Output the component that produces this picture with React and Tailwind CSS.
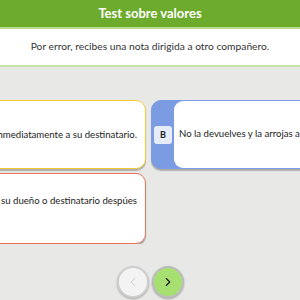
import { ChevronLeft, ChevronRight } from "lucide-react"

const answers = [
    { letter: "A", lines: ["Se la entregas inmediatamente a su destinatario."], border: "border-[#f0c93a]" },
    { letter: "B", lines: ["No la devuelves y la arrojas a la papelera."], border: "border-[#7b9be3]", selected: true },
    { letter: "C", lines: ["Se la devuelves a su dueño o destinatario despúes", "de leerla."], border: "border-[#e8715c]" },
]

function AnswerCard({ answer }) {
    if (answer.selected) {
        return (
            <div className="h-full flex items-stretch rounded-[10px] bg-[#7b9be3] border border-[#7b9be3] shadow-[0_2px_1px_rgba(0,0,0,0.25)]">
                <div className="w-[22px] flex items-center justify-center shrink-0">
                    <span className="w-[18px] h-[18px] rounded-[3px] bg-[#e6ecf8] text-[9px] font-bold text-[#222] flex items-center justify-center">
                        {answer.letter}
                    </span>
                </div>
                <div className="flex-1 bg-white rounded-l-[9px] flex items-center pl-[5px] whitespace-nowrap">
                    {answer.lines[0]}
                </div>
            </div>
        )
    }

    return (
        <div className={"h-full flex items-center justify-end pr-[8px] rounded-[10px] bg-white border shadow-[0_2px_1px_rgba(0,0,0,0.25)] " + answer.border}>
            <div className={"w-max whitespace-nowrap leading-[13px] " + (answer.lines.length > 1 ? "mb-[4px]" : "")}>
                {answer.lines.map(function (line) {
                    return <div key={line}>{line}</div>
                })}
            </div>
        </div>
    )
}

export default function App() {
    return (
        <div className="w-[300px] h-[300px] overflow-hidden bg-[#e8e8e6] font-['Lato',sans-serif] flex flex-col">
            <div className="h-[27px] bg-[#6cab2c] text-white text-[13px] font-bold flex items-center justify-center">
                Test sobre valores
            </div>
            <div className="h-[2px] bg-[#b9dc90]" />
            <div className="h-[36px] bg-white text-[10.25px] text-[#333] flex items-center justify-center">
                Por error, recibes una nota dirigida a otro compañero.
            </div>
            <div className="h-[2px] bg-[#c8e2a8]" />

            <div className="mt-[33px] overflow-hidden">
                <div className="ml-[-154px] grid grid-cols-[300px_300px] grid-rows-[69px_71px] gap-x-[5px] gap-y-[4px] text-[9.6px] text-[#222]">
                    {answers.map(function (answer) {
                        return <AnswerCard key={answer.letter} answer={answer} />
                    })}
                </div>
            </div>

            <div className="mt-[22px] flex justify-center gap-[3px]">
                <button className="w-[32px] h-[32px] rounded-full bg-[#f3f3f3] border-2 border-[#cfcfcf] shadow-[0_1px_2px_rgba(0,0,0,0.3)] flex items-center justify-center text-[#c4c4c4]">
                    <ChevronLeft size={14} strokeWidth={1.5} />
                </button>
                <button className="w-[32px] h-[32px] rounded-full bg-[#a6e071] border-2 border-[#bdbdbd] shadow-[0_1px_2px_rgba(0,0,0,0.3)] flex items-center justify-center text-[#1b1b1b]">
                    <ChevronRight size={14} strokeWidth={2} />
                </button>
            </div>
        </div>
    )
}
